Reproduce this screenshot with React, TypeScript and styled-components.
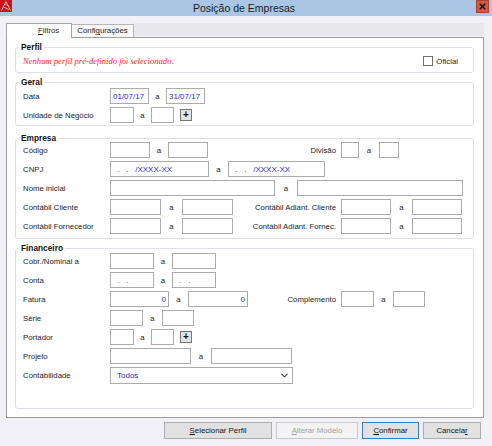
import { createGlobalStyle, styled } from 'styled-components';

const GlobalStyle = createGlobalStyle`
  html, body {
    margin: 0;
    padding: 0;
  }
  body {
    background: #f0f0f6;
    font-family: "Liberation Sans", Arial, sans-serif;
  }
`;

const Window = styled.div`
  width: 492px;
  height: 446px;
  background: #f0f0f6;
  display: flex;
  flex-direction: column;
  overflow: hidden;
  color: #1e1e1e;
`;

const TitleBar = styled.div`
  height: 16px;
  flex-shrink: 0;
  background: #aac6e4;
  display: flex;
  align-items: flex-start;
`;

const AppIcon = styled.svg`
  width: 12px;
  height: 12px;
  flex-shrink: 0;
  display: block;
`;

const Title = styled.div`
  flex: 1;
  text-align: center;
  font-size: 10.5px;
  line-height: 16px;
  color: #1b1b1b;
`;

const CloseBox = styled.div`
  width: 13px;
  height: 13px;
  margin-right: 3px;
  box-sizing: border-box;
  background: #cf5a43;
  border: 1px solid #a9412f;
  display: flex;
  align-items: center;
  justify-content: center;
`;

const Content = styled.div`
  flex: 1;
  display: flex;
  flex-direction: column;
  padding: 7px 8px 0 6px;
`;

const TabBar = styled.div`
  display: flex;
  align-items: flex-end;
  height: 14px;
  font-size: 7.8px;
`;

const Tab = styled.div<{ $active?: boolean }>`
  box-sizing: border-box;
  white-space: nowrap;
  border: 1px solid ${( { $active } ) => $active ? '#a5a5a5' : '#b7b7b7'};
  border-bottom: none;
  ${( { $active } ) => $active
    ? `
      width: 66px;
      height: 15px;
      margin-bottom: -1px;
      padding-left: 31px;
      line-height: 13px;
      background: #fff;
      position: relative;
      z-index: 1;
    `
    : `
      width: 62px;
      height: 13px;
      border-left: none;
      text-align: center;
      line-height: 12px;
      background: #f8f8f8;
    `}
`;

const TabFiller = styled.div`
  flex: 1;
  align-self: flex-start;
  height: 13px;
  background: #e8e8ec;
`;

const Panel = styled.div`
  height: 381px;
  box-sizing: border-box;
  border: 1px solid #9d9d9d;
  background: #fff;
  padding: 3px 9px 8px 8px;
  display: flex;
  flex-direction: column;
`;

const Group = styled.fieldset<{ $mt: number; $grow?: boolean }>`
  margin: ${( { $mt } ) => $mt}px 0 0;
  padding: 0;
  min-width: 0;
  border: 1px solid #dcdfe5;
  border-radius: 3px;
  ${( { $grow } ) => $grow ? 'flex: 1;' : ''}
`;

const Legend = styled.legend`
  margin-left: 3px;
  padding: 0 2px;
  font-weight: bold;
  font-size: 8.3px;
  line-height: 12px;
  color: #111;
`;

const GroupBody = styled.div<{ $mt?: number; $pb: number; $pr?: number }>`
  display: flex;
  flex-direction: column;
  gap: 3px;
  margin-top: ${( { $mt = 0 } ) => $mt}px;
  padding: 0 ${( { $pr = 7 } ) => $pr}px ${( { $pb } ) => $pb}px 7px;
`;

const Row = styled.div`
  display: flex;
  align-items: center;
  height: 16px;
  font-size: 7.8px;
  white-space: nowrap;
`;

const Label = styled.span`
  width: 87px;
  flex-shrink: 0;
`;

const LeftPart = styled.div<{ $fixed?: boolean }>`
  display: flex;
  align-items: center;
  flex-shrink: 0;
  ${( { $fixed } ) => $fixed ? 'width: 142px;' : ''}
`;

const SideLabel = styled.span`
  width: 84px;
  margin-right: 5px;
  flex-shrink: 0;
  display: flex;
  justify-content: flex-end;
`;

const Field = styled.input<{ $w: number; $right?: boolean }>`
  width: ${( { $w } ) => $w}px;
  height: 16px;
  box-sizing: border-box;
  margin: 0;
  padding: 0 2px;
  border: 1px solid #ababab;
  background: #fff;
  font-family: inherit;
  font-size: 8px;
  color: #2d2dc4;
  text-align: ${( { $right } ) => $right ? 'right' : 'left'};
  outline: none;
  flex-shrink: 0;
`;

const Sep = styled.span<{ $w: number }>`
  width: ${( { $w } ) => $w}px;
  flex-shrink: 0;
  text-align: center;
`;

const PlusButton = styled.span`
  width: 12px;
  height: 12px;
  margin-left: 6px;
  box-sizing: border-box;
  border: 1px solid #767676;
  background: #e3e3e3;
  display: flex;
  align-items: center;
  justify-content: center;
  font-weight: bold;
  font-size: 10px;
  line-height: 1;
  color: #111;
`;

const ErrorText = styled.span`
  font-family: "Liberation Serif", "Times New Roman", serif;
  font-style: italic;
  font-size: 8.6px;
  color: #e5262e;
`;

const CheckWrap = styled.label`
  margin-left: auto;
  display: flex;
  align-items: center;
`;

const CheckBox = styled.span`
  width: 10px;
  height: 10px;
  box-sizing: border-box;
  border: 1px solid #6f6f6f;
  background: #fff;
  margin-right: 3px;
`;

const Select = styled.div`
  width: 183px;
  height: 17px;
  box-sizing: border-box;
  border: 1px solid #ababab;
  background: #fff;
  display: flex;
  align-items: center;
  padding: 0 4px 0 6px;
  font-size: 8px;
  color: #2d2dc4;
`;

const Chevron = styled.svg`
  margin-left: auto;
  width: 7px;
  height: 5px;
`;

const ButtonBar = styled.div`
  display: flex;
  justify-content: flex-end;
  gap: 4px;
  margin-top: 4px;
  padding-right: 3px;
`;

const Button = styled.button<{ $w: number; $primary?: boolean }>`
  width: ${( { $w } ) => $w}px;
  height: 17px;
  box-sizing: border-box;
  margin: 0;
  padding: 0;
  font-family: inherit;
  font-size: 7.8px;
  color: #111;
  background: #e1e1e1;
  border: 1px solid ${( { $primary } ) => $primary ? '#3c7db3' : '#adadad'};
  &:disabled {
    background: #f3f3f3;
    border-color: #cacaca;
    color: #a2a2a2;
  }
`;

function Pair( { a, b, gap, va, vb, right }: { a: number, b: number, gap: number, va?: string, vb?: string, right?: boolean } ): JSX.Element {
  return (
    <>
      <Field $w={a} $right={right} readOnly defaultValue={va ?? ''} />
      <Sep $w={gap}>a</Sep>
      <Field $w={b} $right={right} readOnly defaultValue={vb ?? ''} />
    </>
  );
}

function App(): JSX.Element {
  return (
    <Window>
      <GlobalStyle />
      <TitleBar>
        <AppIcon viewBox="0 0 12 12">
          <rect width="12" height="12" fill="#c8151d" />
          <path d="M1.5 10.5 L6 1.5 L10.5 10.5 M3.5 7 L9 9.5 M5 4 L8.5 6" stroke="#f6a7a9" strokeWidth="1" fill="none" />
        </AppIcon>
        <Title>Posição de Empresas</Title>
        <CloseBox>
          <svg width="7" height="7" viewBox="0 0 7 7">
            <path d="M0.8 0.8 L6.2 6.2 M6.2 0.8 L0.8 6.2" stroke="#111" strokeWidth="1.6" />
          </svg>
        </CloseBox>
      </TitleBar>

      <Content>
        <TabBar>
          <Tab $active><u>F</u>iltros</Tab>
          <Tab>Confi<u>g</u>urações</Tab>
          <TabFiller />
        </TabBar>

        <Panel>
          <Group $mt={0}>
            <Legend>Perfil</Legend>
            <GroupBody $pb={3} $pr={15}>
              <Row>
                <ErrorText>Nenhum perfil pré-definido foi selecionado.</ErrorText>
                <CheckWrap>
                  <CheckBox />
                  Oficial
                </CheckWrap>
              </Row>
            </GroupBody>
          </Group>

          <Group $mt={3}>
            <Legend>Geral</Legend>
            <GroupBody $pb={2}>
              <Row>
                <Label>Data</Label>
                <Pair a={39} b={39} gap={17} va="01/07/17" vb="31/07/17" />
              </Row>
              <Row>
                <Label>Unidade de Negócio</Label>
                <Pair a={24} b={23} gap={17} />
                <PlusButton>+</PlusButton>
              </Row>
            </GroupBody>
          </Group>

          <Group $mt={6}>
            <Legend>Empresa</Legend>
            <GroupBody $mt={-2} $pb={4}>
              <Row>
                <Label>Código</Label>
                <LeftPart $fixed>
                  <Pair a={40} b={40} gap={18} />
                </LeftPart>
                <SideLabel>Divisão</SideLabel>
                <Pair a={18} b={20} gap={20} />
              </Row>
              <Row>
                <Label>CNPJ</Label>
                <Pair a={99} b={97} gap={19} va="  .   .   /XXXX-XX" vb="  .   .   /XXXX-XX" />
              </Row>
              <Row>
                <Label>Nome inicial</Label>
                <Pair a={165} b={166} gap={22} />
              </Row>
              <Row>
                <Label>Contábil Cliente</Label>
                <LeftPart $fixed>
                  <Pair a={51} b={51} gap={21} />
                </LeftPart>
                <SideLabel>Contábil Adiant. Cliente</SideLabel>
                <Pair a={50} b={50} gap={21} />
              </Row>
              <Row>
                <Label>Contábil Fornecedor</Label>
                <LeftPart $fixed>
                  <Pair a={51} b={51} gap={21} />
                </LeftPart>
                <SideLabel>Contábil Adiant. Fornec.</SideLabel>
                <Pair a={50} b={50} gap={21} />
              </Row>
            </GroupBody>
          </Group>

          <Group $mt={3} $grow>
            <Legend>Financeiro</Legend>
            <GroupBody $mt={-1} $pb={4}>
              <Row>
                <Label>Cobr./Nominal a</Label>
                <Pair a={44} b={44} gap={18} />
              </Row>
              <Row>
                <Label>Conta</Label>
                <Pair a={44} b={44} gap={18} va="  .   ." vb="  .   ." />
              </Row>
              <Row>
                <Label>Fatura</Label>
                <LeftPart $fixed>
                  <Pair a={59} b={60} gap={19} va="0" vb="0" right />
                </LeftPart>
                <SideLabel>Complemento</SideLabel>
                <Pair a={33} b={32} gap={19} />
              </Row>
              <Row>
                <Label>Série</Label>
                <Pair a={33} b={32} gap={19} />
              </Row>
              <Row>
                <Label>Portador</Label>
                <Pair a={24} b={23} gap={17} />
                <PlusButton>+</PlusButton>
              </Row>
              <Row>
                <Label>Projeto</Label>
                <Pair a={81} b={81} gap={20} />
              </Row>
              <Row>
                <Label>Contabilidade</Label>
                <Select>
                  Todos
                  <Chevron viewBox="0 0 7 5">
                    <path d="M0.5 0.8 L3.5 3.8 L6.5 0.8" stroke="#333" strokeWidth="1.1" fill="none" />
                  </Chevron>
                </Select>
              </Row>
            </GroupBody>
          </Group>
        </Panel>

        <ButtonBar>
          <Button $w={108}><u>S</u>elecionar Perfil</Button>
          <Button $w={82} disabled><u>A</u>lterar Modelo</Button>
          <Button $w={57} $primary><u>C</u>onfirmar</Button>
          <Button $w={58}>Cancela<u>r</u></Button>
        </ButtonBar>
      </Content>
    </Window>
  );
}

export default App;
